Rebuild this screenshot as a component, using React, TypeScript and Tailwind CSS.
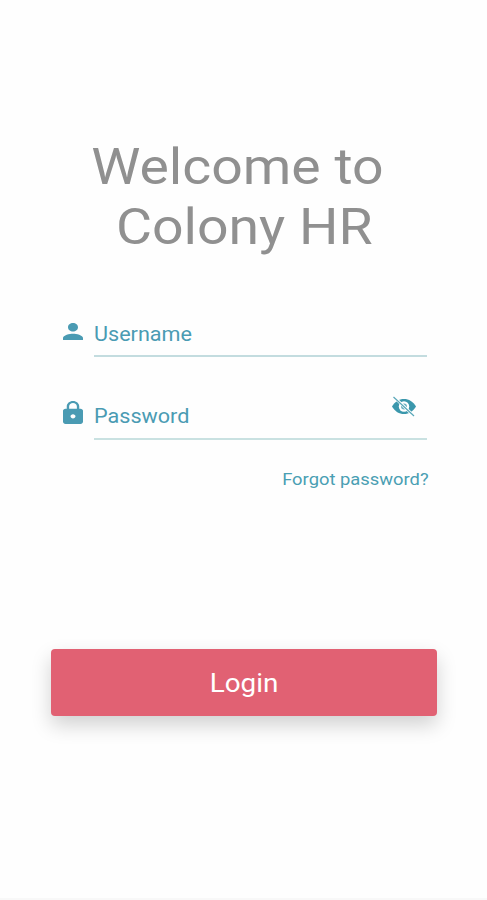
import React, { useState } from "react";

interface IconProps {
  className?: string;
}

function PersonIcon({ className }: IconProps) {
  return (
    <svg viewBox="4 4 16 16" preserveAspectRatio="none" className={className} fill="currentColor">
      <path d="M12 12c2.21 0 4-1.79 4-4s-1.79-4-4-4-4 1.79-4 4 1.79 4 4 4zm0 2c-2.67 0-8 1.34-8 4v2h16v-2c0-2.66-5.33-4-8-4z" />
    </svg>
  );
}

function LockIcon({ className }: IconProps) {
  return (
    <svg viewBox="4 1 16 21" preserveAspectRatio="none" className={className} fill="currentColor">
      <path d="M18 8h-1V6c0-2.76-2.24-5-5-5S7 3.24 7 6v2H6c-1.1 0-2 .9-2 2v10c0 1.1.9 2 2 2h12c1.1 0 2-.9 2-2V10c0-1.1-.9-2-2-2zm-6 9c-1.1 0-2-.9-2-2s.9-2 2-2 2 .9 2 2-.9 2-2 2zm3.1-9H8.9V6c0-1.71 1.39-3.1 3.1-3.1 1.71 0 3.1 1.39 3.1 3.1v2z" />
    </svg>
  );
}

function EyeOffIcon({ className }: IconProps) {
  return (
    <svg viewBox="0 0 26 21" className={className} fill="none">
      <path d="M1 10.5C4 5.5 8 3 13 3s9 2.500 12 7.500c-3 5-7 7.500-12 7.500S4 15.500 1 10.500z" fill="currentColor" />
      <circle cx="13" cy="10.500" r="5.200" fill="white" />
      <circle cx="13" cy="10.500" r="3" fill="currentColor" fillOpacity="0.75" />
      <path d="M3.500 1.500L22.500 19.500" stroke="white" strokeWidth="3" />
      <path d="M2.500 1L23 20" stroke="currentColor" strokeOpacity="0.85" strokeWidth="1.200" />
    </svg>
  );
}

export default function App() {
  const [username, setUsername] = useState("");
  const [password, setPassword] = useState("");
  const [showPassword, setShowPassword] = useState(false);

  const handleSubmit = (e: React.FormEvent) => {
    e.preventDefault();
  };

  return (
    <main className="flex h-[900px] w-[487px] flex-col border-b-2 border-[#f8f8f8] bg-[#fefefe] font-[Roboto,sans-serif]">
      <h1 className="ml-px mt-[137px] scale-x-[1.107] self-center whitespace-pre text-center text-[50px] leading-[60px] text-[#909090]">
        {"Welcome to \nColony HR"}
      </h1>

      <form onSubmit={handleSubmit} className="flex flex-col">
        {/* Username */}
        <div className="mt-[59px] flex h-[41px] pl-[63px]">
          <PersonIcon className="mt-[7px] h-[17px] w-[20px] text-[#4a9bb3]" />
          <div className="ml-[11px] flex w-[333px] border-b-2 border-[#c3dcdf]">
            <input
              type="text"
              value={username}
              onChange={(e) => setUsername(e.target.value)}
              placeholder="Username"
              className="w-[300px] origin-left scale-x-[1.08] pb-[3px] text-[20px] text-[#4a9bb3] outline-none placeholder:text-[#4a9bb3]"
            />
          </div>
        </div>

        {/* Password */}
        <div className="mt-[41px] flex h-[42px] pl-[63px]">
          <LockIcon className="mt-[3px] h-[23px] w-[20px] text-[#4a9bb3]" />
          <div className="ml-[11px] flex w-[333px] border-b-2 border-[#c9e1e1]">
            <input
              type={showPassword ? "text" : "password"}
              value={password}
              onChange={(e) => setPassword(e.target.value)}
              placeholder="Password"
              className="w-[270px] origin-left scale-x-[1.08] pb-[5px] text-[20px] text-[#4a9bb3] outline-none placeholder:text-[#4a9bb3]"
            />
            <button
              type="button"
              aria-label="Toggle password visibility"
              onClick={() => setShowPassword(!showPassword)}
              className="-mt-[2px] ml-[27px] h-[21px] text-[#3b97ac]"
            >
              <EyeOffIcon className="h-[21px] w-[26px]" />
            </button>
          </div>
        </div>

        <a href="#" className="mr-[58px] mt-[27px] origin-right scale-x-[1.08] self-end text-[17px] leading-6 text-[#4a9fb3]">
          Forgot password?
        </a>

        <button
          type="submit"
          className="ml-[51px] mt-[158px] h-[67px] w-[386px] rounded-[4px] bg-[#e16173] pt-[2px] text-[26px] text-white shadow-[0_9px_20px_rgba(0,0,0,0.18)]"
        >
          <span className="inline-block scale-x-[1.07]">Login</span>
        </button>
      </form>
    </main>
  );
}
